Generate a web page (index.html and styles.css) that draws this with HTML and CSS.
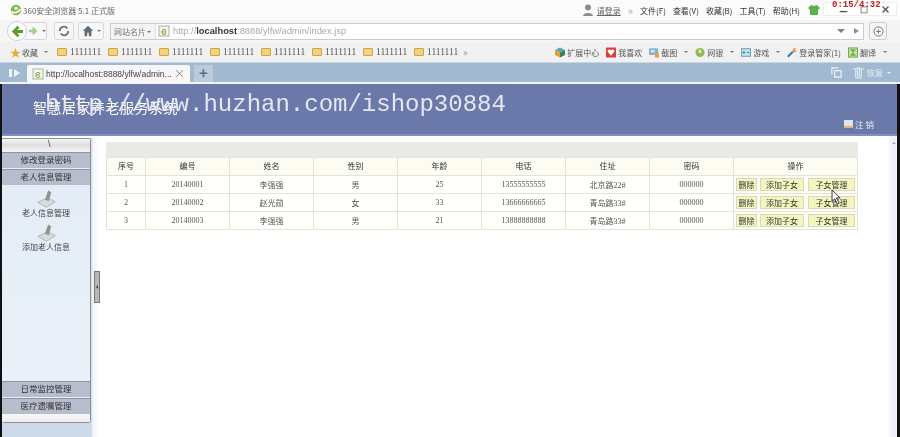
FILE: index.html
```html
<!DOCTYPE html>
<html lang="zh-CN">
<head>
  <meta charset="UTF-8">
  <title>360安全浏览器 5.1 正式版</title>
  <link rel="stylesheet" href="styles.css">
</head>
<body>
  <div class="titlebar">
    <svg class="logo" viewBox="0 0 14 14"><circle cx="7" cy="7" r="6" fill="#7db84a"/><path d="M2 9c3 2 8 1 10-3" stroke="#fff" stroke-width="2" fill="none"/><circle cx="7" cy="5" r="2" fill="#e8f2d0"/></svg>
    <span class="title-text">360安全浏览器 5.1 正式版</span>
    <span class="title-right">
      <svg class="user" viewBox="0 0 10 12"><circle cx="5" cy="3.500" r="3" fill="#8c8c8c"/><path d="M0 12c0-4 10-4 10 0z" fill="#8c8c8c"/></svg>
      <u class="login">请登录</u>
      <span class="chev">»</span>
      <span>文件(F)</span><span>查看(V)</span><span>收藏(B)</span><span>工具(T)</span><span>帮助(H)</span>
      <svg class="shirt" viewBox="0 0 12 12"><path d="M3 1l3 1 3-1 3 3-2 2v5H2V6L0 4z" fill="#5db04a"/></svg>
      <span class="winbtns">
        <svg viewBox="0 0 21 14"><path d="M6 10h9" stroke="#555" stroke-width="1.500"/></svg>
        <svg viewBox="0 0 21 14"><rect x="6.500" y="4.500" width="7" height="7" stroke="#777" fill="none"/></svg>
        <svg viewBox="0 0 21 14"><path d="M7 4l7 7M14 4l-7 7" stroke="#555" stroke-width="1.500"/></svg>
      </span>
    </span>
  </div>

  <div class="navbar">
    <span class="backbtn">
      <svg viewBox="0 0 14 14"><path d="M13 7H5M8 2L3 7l5 5" stroke="#5c9e2e" stroke-width="3" fill="none"/></svg>
    </span>
    <span class="navbtn forward">
      <svg viewBox="0 0 14 14"><path d="M1 7h8M6 3l4 4-4 4" stroke="#a9cf8e" stroke-width="3" fill="none"/></svg>
      <i class="caret"></i>
    </span>
    <span class="navbtn square">
      <svg viewBox="0 0 14 14"><path d="M2 7a5 5 0 0 1 9-3M12 7a5 5 0 0 1-9 3" stroke="#66727d" stroke-width="2" fill="none"/></svg>
    </span>
    <span class="navbtn home">
      <svg viewBox="0 0 14 14"><path d="M7 1L1 7h2v6h3V9h2v4h3V7h2z" fill="#5b6b78"/></svg>
      <i class="caret"></i>
    </span>
    <div class="addressbar">
      <span class="site-card">网站名片<i class="caret"></i></span>
      <svg class="page-ico" viewBox="0 0 12 12"><rect x="1" y="1" width="10" height="10" fill="#f4f7ec" stroke="#a9b59a"/><path d="M8 7H4a2 2 0 1 1 4-1M4 7a2 2 0 0 0 4 1" stroke="#6ca531" fill="none"/></svg>
      <span class="url">http://<b>localhost</b>:8888/ylfw/admin/index.jsp</span>
      <span class="addr-end"><i class="caret dark"></i><i class="play"></i></span>
    </div>
    <span class="plusbtn">
      <svg viewBox="0 0 12 12"><circle cx="6" cy="6" r="5" fill="none" stroke="#66727d"/><path d="M6 3.500v5M3.500 6h5" stroke="#66727d"/></svg>
    </span>
  </div>

  <div class="bookmarks">
    <span class="fav">★</span><span class="fav-text">收藏</span><i class="caret"></i>
    <div class="folders">
      <span class="folder"><i></i>1111111</span>
      <span class="folder"><i></i>1111111</span>
      <span class="folder"><i></i>1111111</span>
      <span class="folder"><i></i>1111111</span>
      <span class="folder"><i></i>1111111</span>
      <span class="folder"><i></i>1111111</span>
      <span class="folder"><i></i>1111111</span>
      <span class="folder"><i></i>1111111</span>
      <span class="more">»</span>
    </div>
    <div class="tools">
      <span><svg class="tool-ico" viewBox="0 0 12 12"><path d="M6 0l6 3-6 3-6-3z" fill="#58a6b8"/><path d="M0 3l6 3v6l-6-3z" fill="#e3a02e"/><path d="M12 3L6 6v6l6-3z" fill="#3f7f4c"/></svg>扩展中心</span>
      <span><svg class="tool-ico" viewBox="0 0 12 12"><rect width="12" height="12" rx="1" fill="#d8403a"/><path d="M6 10L2 5a2 2 0 0 1 4-1 2 2 0 0 1 4 1z" fill="#fff"/></svg>我喜欢</span>
      <span><svg class="tool-ico" viewBox="0 0 12 12"><rect y="1" width="11" height="8" fill="#7fb0d8"/><rect x="2" y="3" width="5" height="3" fill="#d7e8f5"/><path d="M7 7h5v5H7z" fill="#e8a23c"/></svg>截图<i class="caret"></i></span>
      <span><svg class="tool-ico" viewBox="0 0 12 12"><circle cx="6" cy="6" r="5.500" fill="#8dbb5c"/><path d="M4 2l3 1 1 3-3 1z" fill="#f2e6b0"/></svg>网银<i class="caret"></i></span>
      <span><svg class="tool-ico" viewBox="0 0 12 12"><rect x=".5" y="1.500" width="11" height="9" fill="#bfe3e8" stroke="#5b92b8"/><path d="M2 6h3M3.500 4.500v3M7 6h3" stroke="#2f6f88"/></svg>游戏<i class="caret"></i></span>
      <span><svg class="tool-ico" viewBox="0 0 12 12"><path d="M1 11l6-6" stroke="#3b78b8" stroke-width="2.500"/><path d="M7 5a3 3 0 0 1 4-4L9 3l1 1 2-1a3 3 0 0 1-5 2z" fill="#e09a3a"/></svg>登录管家(1)</span>
      <span><svg class="tool-ico" viewBox="0 0 12 12"><rect x=".5" y=".5" width="11" height="11" fill="#bfe39a" stroke="#5da03c"/><path d="M3 3h6M6 3v6M3 9h6" stroke="#3a7d2a"/></svg>翻译<i class="caret"></i></span>
    </div>
  </div>

  <div class="tabbar">
    <svg class="tab-side" viewBox="0 0 12 10"><path d="M0 1h3v8H0zM5 1l6 4-6 4z" fill="#eef3f8"/></svg>
    <div class="tab">
      <svg class="page-ico" viewBox="0 0 12 12"><rect x="1" y="1" width="10" height="10" fill="#f4f7ec" stroke="#a9b59a"/><path d="M8 7H4a2 2 0 1 1 4-1M4 7a2 2 0 0 0 4 1" stroke="#6ca531" fill="none"/></svg>
      <span class="tab-text">http://localhost:8888/ylfw/admin...</span>
      <span class="tab-close">×</span>
    </div>
    <span class="newtab">+</span>
    <div class="tab-right">
      <svg class="restore" viewBox="0 0 12 12"><path d="M1 8V1h7M4 4h7v7H4z" stroke="#eef3f8" stroke-width="1.300" fill="none"/></svg>
      <svg class="trash" viewBox="0 0 12 13"><path d="M0 2h12M3 2v10h6V2M5 3v8M7 3v8M4 1h4" stroke="#eef3f8" fill="none"/></svg>
      <span class="restore-text">恢复</span><i class="caret light"></i>
    </div>
  </div>

  <div class="page">
    <header class="app-header">
      <span class="app-title">智慧居家养老服务系统</span>
      <span class="logout"><i></i>注 销</span>
    </header>

    <div class="app-main">
      <aside class="side-col">
        <div class="sidebar">
          <div class="side-top">\</div>
          <div class="side-head">修改登录密码</div>
          <div class="side-head">老人信息管理</div>
          <div class="side-body">
            <div class="side-item">
              <svg viewBox="0 0 24 24"><path d="M1 17l12-6 10 5-11 7z" fill="#d9dcdc" stroke="#a8adad"/><path d="M14 2l4 2-3 11-5-1z" fill="#8f9595"/></svg>
              <span>老人信息管理</span>
            </div>
            <div class="side-item">
              <svg viewBox="0 0 24 24"><path d="M1 17l12-6 10 5-11 7z" fill="#d9dcdc" stroke="#a8adad"/><path d="M14 2l4 2-3 11-5-1z" fill="#8f9595"/></svg>
              <span>添加老人信息</span>
            </div>
          </div>
          <div class="side-head">日常监控管理</div>
          <div class="side-head">医疗遗嘱管理</div>
          <div class="side-foot"></div>
        </div>
        <div class="splitter"><i></i></div>
      </aside>

      <main class="content">
        <div class="table-wrap">
          <div class="table-cap"></div>
          <table class="grid">
            <colgroup>
              <col class="c-no"><col class="c-id"><col class="c-std"><col class="c-std"><col class="c-std"><col class="c-std"><col class="c-std"><col class="c-std"><col class="c-op">
            </colgroup>
            <tr><th>序号</th><th>编号</th><th>姓名</th><th>性别</th><th>年龄</th><th>电话</th><th>住址</th><th>密码</th><th>操作</th></tr>
            <tr>
              <td>1</td><td>20140001</td><td>李强强</td><td>男</td><td>25</td><td>13555555555</td><td>北京路22#</td><td>000000</td>
              <td class="ops"><button>删除</button><button>添加子女</button><button>子女管理</button></td>
            </tr>
            <tr>
              <td>2</td><td>20140002</td><td>赵光勋</td><td>女</td><td>33</td><td>13666666665</td><td>青岛路33#</td><td>000000</td>
              <td class="ops"><button>删除</button><button>添加子女</button><button>子女管理</button></td>
            </tr>
            <tr>
              <td>3</td><td>20140003</td><td>李强强</td><td>男</td><td>21</td><td>13888888888</td><td>青岛路33#</td><td>000000</td>
              <td class="ops"><button>删除</button><button>添加子女</button><button>子女管理</button></td>
            </tr>
          </table>
        </div>
        <div class="scrollbar"><i></i></div>
      </main>
    </div>
  </div>

  <!-- recording overlays on top of the capture -->
  <div class="watermark">http://www.huzhan.com/ishop30884</div>
  <div class="clock">0:15/4:32</div>
  <svg class="cursor" viewBox="0 0 12 18"><path d="M1 1v13l3-3 3 6 2-1-3-6h4z" fill="#fff" stroke="#222"/></svg>
</body>
</html>
```

FILE: styles.css
```css
* { box-sizing: border-box; }

html, body {
  margin: 0;
  width: 900px;
  height: 437px;
  overflow: hidden;
}

body {
  position: relative;
  display: flex;
  flex-direction: column;
  background: #111;
  font-family: "Noto Sans CJK SC", "Liberation Sans", sans-serif;
  font-size: 8px;
  color: #444;
  filter: blur(0.3px);
}

.caret {
  display: inline-block;
  width: 0;
  height: 0;
  margin-left: 4px;
  border-left: 2px solid transparent;
  border-right: 2px solid transparent;
  border-top: 2px solid #777;
  vertical-align: middle;
}
.caret.dark { border-left-width: 4px; border-right-width: 4px; border-top: 4px solid #7b8288; margin: 0; }
.caret.light { border-top-color: #eef3f8; }

/* browser title */
.titlebar {
  height: 20px;
  display: flex;
  align-items: center;
  padding-left: 10px;
  background: #fbfbfb;
}
.logo { width: 12px; height: 12px; margin-right: 1px; }
.title-text { font-size: 8px; color: #666; }
.title-right {
  margin-left: auto;
  display: flex;
  align-items: center;
  gap: 7px;
  color: #333;
  font-size: 8px;
  padding-right: 3px;
}
.user { width: 10px; height: 12px; margin-right: -3px; }
.login { color: #666; }
.chev { color: #aaa; font-size: 11px; line-height: 11px; }
.shirt { width: 12px; height: 12px; margin-left: 1px; }
.winbtns {
  display: flex;
  width: 74px;
  height: 14px;
  margin: -3px 0 0 -4px;
  justify-content: flex-end;
  border: 1px solid #eee;
  background: #fff;
}
.winbtns svg { width: 21px; height: 12px; }

/* address row */
.navbar {
  height: 22px;
  display: flex;
  align-items: center;
  gap: 4px;
  padding: 0 13px 0 7px;
  background: #f5f5f5;
}
.backbtn {
  width: 20px;
  height: 20px;
  border-radius: 50%;
  border: 1px solid #cfcfcf;
  background: #fff;
  display: flex;
  align-items: center;
  justify-content: center;
  z-index: 1;
}
.backbtn svg { width: 13px; height: 13px; }
.navbtn {
  height: 18px;
  display: flex;
  align-items: center;
  justify-content: center;
  border: 1px solid #d8d8d8;
  border-radius: 3px;
  background: #f8f8f8;
}
.navbtn svg { width: 12px; height: 12px; }
.navbtn .caret { margin-left: 3px; }
.forward { width: 24px; margin-left: -8px; padding-left: 5px; border-left: 0; margin-right: 3px; }
.square { width: 20px; }
.home { width: 26px; margin-right: 2px; }
.addressbar {
  flex: 1;
  height: 17px;
  display: flex;
  align-items: center;
  border: 1px solid #ccc;
  background: #fff;
}
.site-card {
  width: 45px;
  padding-left: 3px;
  height: 100%;
  line-height: 15px;
  font-size: 8px;
  color: #777;
  background: #f4f4f4;
  border-right: 1px solid #ddd;
}
.site-card .caret { margin-left: 1px; }
.page-ico { width: 12px; height: 12px; flex: none; }
.addressbar .page-ico { margin: 0 3px 0 2px; }
.url { font-family: "Liberation Sans", sans-serif; font-size: 9.300px; color: #aaa; }
.url b { color: #333; font-weight: 700; }
.addr-end {
  margin-left: auto;
  display: flex;
  align-items: center;
  gap: 9px;
  height: 100%;
  padding-right: 4px;
}
.play {
  border-left: 5px solid #8a9095;
  border-top: 3px solid transparent;
  border-bottom: 3px solid transparent;
}
.plusbtn {
  width: 18px;
  height: 18px;
  margin-left: 1px;
  display: flex;
  align-items: center;
  justify-content: center;
  border: 1px solid #ccc;
  border-radius: 3px;
  background: #f6f6f6;
}
.plusbtn svg { width: 11px; height: 11px; }

/* bookmarks row */
.bookmarks {
  height: 20px;
  display: flex;
  align-items: center;
  padding: 0 13px 0 10px;
  background: #f1f1f1;
  font-size: 8px;
}
.fav { color: #e2ac2c; font-size: 11px; line-height: 12px; margin-right: 1px; }
.fav-text { color: #555; }
.bookmarks > .caret { margin-left: 6px; }
.folders { display: flex; margin-left: 9px; gap: 5px; }
.folder {
  display: flex;
  align-items: center;
  width: 46px;
  font-family: "Liberation Serif", serif;
  font-size: 9.500px;
  color: #555;
}
.folder i {
  width: 10px;
  height: 8px;
  margin-right: 3px;
  border-radius: 1px;
  background: #f2d27a;
  border: 1px solid #cfa540;
}
.more { color: #999; margin-left: -2px; font-size: 10px; line-height: 10px; }
.tools { margin-left: auto; display: flex; align-items: center; gap: 7px; color: #555; }
.tools span { display: flex; align-items: center; }
.tools .caret { margin-left: 7px; }
.tool-ico { width: 10px; height: 11px; margin-right: 2px; }

/* tab row */
.tabbar {
  height: 22px;
  display: flex;
  align-items: flex-end;
  padding-left: 9px;
  background: #a1bad2;
  border-top: 1px solid #c9d6e2;
  border-bottom: 2px solid #f1f5f8;
}
.tab-side { width: 12px; height: 10px; align-self: center; margin-right: 6px; }
.tab {
  width: 163px;
  height: 17px;
  display: flex;
  align-items: center;
  padding: 0 5px;
  background: #f7f7f7;
  border-radius: 2px 2px 0 0;
}
.tab .page-ico { margin-right: 2px; }
.tab-text { font-family: "Liberation Sans", sans-serif; font-size: 8.500px; color: #444; white-space: nowrap; }
.tab-close { margin-left: auto; color: #888; font-size: 11px; line-height: 11px; }
.newtab {
  width: 19px;
  height: 17px;
  margin-left: 4px;
  background: #b9cbdc;
  color: #5d6f83;
  text-align: center;
  font-size: 15px;
  font-weight: 700;
  line-height: 16px;
}
.tab-right {
  margin-left: auto;
  align-self: center;
  display: flex;
  align-items: center;
  padding-right: 9px;
  color: #e6edf3;
}
.restore { width: 11px; height: 11px; margin-right: 11px; }
.trash { width: 11px; height: 12px; margin-right: 3px; }
.restore-text { font-size: 8px; }

/* page below the browser chrome */
.page {
  flex: 1;
  display: flex;
  flex-direction: column;
  min-height: 0;
  margin-right: 3px;
  margin-left: 2px;
}
.app-header {
  height: 52px;
  flex: none;
  display: flex;
  justify-content: space-between;
  background: #6a79a9;
  border-bottom: 2px solid #8291bb;
  padding: 13px 23px 0 31px;
}
.app-title { font-size: 14px; line-height: 20px; color: #fff; letter-spacing: 0.500px; }
.logout {
  display: flex;
  align-items: center;
  align-self: flex-end;
  height: 14px;
  margin-bottom: 3px;
  font-size: 8.500px;
  color: #e8ecf4;
}
.logout i { width: 9px; height: 8px; margin-right: 2px; background: #dce6f2; border-bottom: 2px solid #e2b95e; }

.app-main { flex: 1; display: flex; min-height: 0; background: #fff; }
.side-col {
  width: 98px;
  flex: none;
  display: flex;
  padding-top: 2px;
  background:
    linear-gradient(#fff 2px, transparent 2px),
    linear-gradient(to right, #cddaea 89px, #f3f6fa 91px, #fff 98px);
}
.sidebar {
  width: 89px;
  height: 285px;
  display: flex;
  flex-direction: column;
  border: 1px solid #8a8f97;
  border-top: 0;
  border-left: 0;
  border-radius: 3px;
  background: #e6eff7;
}
.side-top {
  height: 14px;
  padding-left: 46px;
  font-family: "Liberation Sans", sans-serif;
  font-size: 9px;
  line-height: 13px;
  color: #444;
  background: linear-gradient(#8c929a 1px, #f6f6f6 1px, #dedede 50%, #f6f6f6);
}
.side-head {
  height: 16px;
  flex: none;
  margin-bottom: 1px;
  text-align: center;
  font-size: 8.500px;
  line-height: 13px;
  color: #333;
  background: #b7bdcc;
  border-top: 1px solid #8f95a5;
}
.side-body { flex: 1; margin-top: -1px; padding-top: 4px; background: linear-gradient(#e4edf6, #e9f0f8); }
.side-item { display: flex; flex-direction: column; align-items: center; height: 34px; line-height: 11px; color: #444; }
.side-item svg { width: 19px; height: 19px; margin-bottom: -1px; }
.side-foot { height: 8px; flex: none; margin-top: -1px; background: linear-gradient(#f8f8f8, #eee); }
.splitter {
  width: 6px;
  height: 32px;
  margin: 133px 0 0 3px;
  border: 1px solid #777;
  background: #b8b8b8;
  display: flex;
  align-items: center;
  justify-content: center;
}
.splitter i {
  border-right: 2px solid #444;
  border-top: 2px solid transparent;
  border-bottom: 2px solid transparent;
}

.content { flex: 1; display: flex; min-width: 0; }
.table-wrap { flex: 1; padding: 6px 0 0 6px; }
.table-cap { width: 752px; height: 15px; background: #e9e9e6; }
.grid {
  width: 752px;
  border-collapse: collapse;
  table-layout: fixed;
  background: #fff;
}
.c-no { width: 39px; }
.c-id { width: 84px; }
.c-std { width: 84px; }
.c-op { width: 124px; }
.grid th, .grid td {
  height: 18px;
  padding: 0;
  border: 1px solid #e3e3d8;
  text-align: center;
  font-family: "Liberation Serif", "Noto Sans CJK SC", serif;
  font-size: 8px;
  color: #555;
  font-weight: 400;
}
.grid th { background: #fdfcf3; color: #333; padding-bottom: 3px; }
.grid td { background: #fffffb; }
.grid .ops {
  padding: 0 0 0 2px;
  text-align: left;
  background: #fdfdf5;
}
.ops button {
  height: 13px;
  padding: 0;
  margin-right: 3px;
  vertical-align: middle;
  border: 1px solid #d9d9b8;
  background: #f5f6bf;
  font-family: "Noto Sans CJK SC", sans-serif;
  font-size: 8px;
  line-height: 10px;
  color: #333;
}
.ops button:nth-child(1) { width: 21px; }
.ops button:nth-child(2) { width: 44px; margin-right: 4px; }
.ops button:nth-child(3) { width: 47px; margin-right: 0; }

.scrollbar { width: 10px; flex: none; background: linear-gradient(to right, #fff, #eef2f8 50%); }
.scrollbar i {
  display: block;
  margin: 6px 0 0 5px;
  width: 0;
  border-left: 2px solid transparent;
  border-right: 2px solid transparent;
  border-bottom: 2px solid #9aa;
}

/* overlays */
.watermark {
  position: absolute;
  left: 45px;
  top: 90px;
  font-family: "Liberation Mono", monospace;
  font-size: 24px;
  line-height: 30px;
  color: #e4e7f0;
  white-space: nowrap;
}
.clock {
  position: absolute;
  left: 832px;
  top: 1px;
  font-family: "Liberation Mono", monospace;
  font-size: 9px;
  font-weight: 700;
  line-height: 9px;
  color: #b22;
}
.cursor { position: absolute; left: 831px; top: 189px; width: 11px; height: 16px; }
```
